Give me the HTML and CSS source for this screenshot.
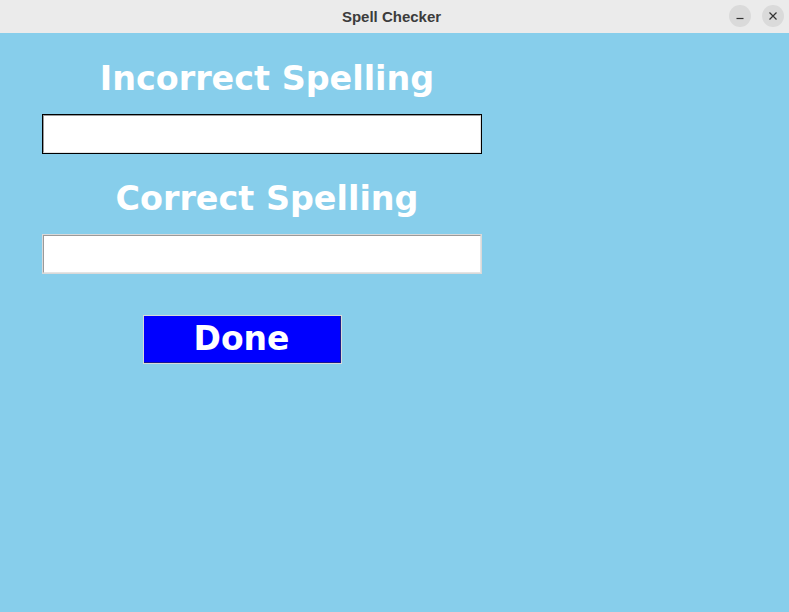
FILE: index.html
```html
<!DOCTYPE html>
<html>
<head>
<meta charset="utf-8">
<link rel="stylesheet" href="styles.css">
</head>
<body>
<div class="window">
  <header class="titlebar">
    <span class="title">Spell Checker</span>
    <div class="controls">
      <span class="ctl">
        <svg width="10" height="10" viewBox="0 0 10 10"><path d="M1.5 7.5h7" stroke="#333" stroke-width="1.2"/></svg>
      </span>
      <span class="ctl">
        <svg width="10" height="10" viewBox="0 0 10 10"><path d="M1.5 1.5l7 7M8.5 1.5l-7 7" stroke="#333" stroke-width="1.2"/></svg>
      </span>
    </div>
  </header>
  <main class="content">
    <div class="column">
      <h1 class="label">Incorrect Spelling</h1>
      <div class="entry focused"><div class="entry-inner"></div></div>
      <h1 class="label second">Correct Spelling</h1>
      <div class="entry"><div class="entry-inner"></div></div>
      <div class="btn-row">
        <button class="done">Done</button>
      </div>
    </div>
  </main>
</div>
</body>
</html>
```
FILE: styles.css
```css
html, body {
  margin: 0;
  padding: 0;
  height: 100%;
}
.window {
  width: 789px;
  height: 612px;
  display: flex;
  flex-direction: column;
  background: #87ceeb;
}
.titlebar {
  height: 33px;
  flex: none;
  background: #ebebeb;
  display: flex;
  align-items: center;
  justify-content: center;
  position: relative;
}
.title {
  font-family: "Liberation Sans", Arial, sans-serif;
  font-weight: bold;
  font-size: 15px;
  color: #3c3c3c;
  padding-right: 6px;
}
.controls {
  position: absolute;
  right: 5px;
  top: 5px;
  display: flex;
  gap: 11px;
}
.ctl {
  width: 22px;
  height: 22px;
  border-radius: 50%;
  background: #dadada;
  display: flex;
  align-items: center;
  justify-content: center;
}
.content {
  flex: 1;
  padding: 26px 0 0 42px;
}
.column {
  width: 440px;
  display: flex;
  flex-direction: column;
}
.label {
  margin: 0;
  padding-left: 10px;
  text-align: center;
  font-family: "DejaVu Sans", sans-serif;
  font-weight: bold;
  font-size: 33.4px;
  line-height: 40px;
  color: #ffffff;
}
.label.second {
  margin-top: 25px;
}
.entry {
  margin-top: 15px;
  height: 40px;
  box-sizing: border-box;
  border: 1px solid #d9d9d9;
  background: #ffffff;
}
.entry.focused {
  border-color: #000000;
}
.entry-inner {
  height: 100%;
  box-sizing: border-box;
  border-top: 1px solid #9a9a9a;
  border-left: 1px solid #9a9a9a;
  border-bottom: 1px solid #e4e4e4;
  border-right: 1px solid #e4e4e4;
  background: #ffffff;
}
.btn-row {
  margin-top: 41px;
  padding-left: 101px;
  display: flex;
}
.done {
  width: 199px;
  height: 49px;
  box-sizing: border-box;
  border: 1px solid #d9d9d9;
  box-shadow: inset -1px -1px 0 #1a1a8c;
  background: #0000ff;
  color: #ffffff;
  font-family: "DejaVu Sans", sans-serif;
  font-weight: bold;
  font-size: 33px;
  line-height: 38px;
  padding: 0 2px 2px 0;
  margin: 0;
}
```
